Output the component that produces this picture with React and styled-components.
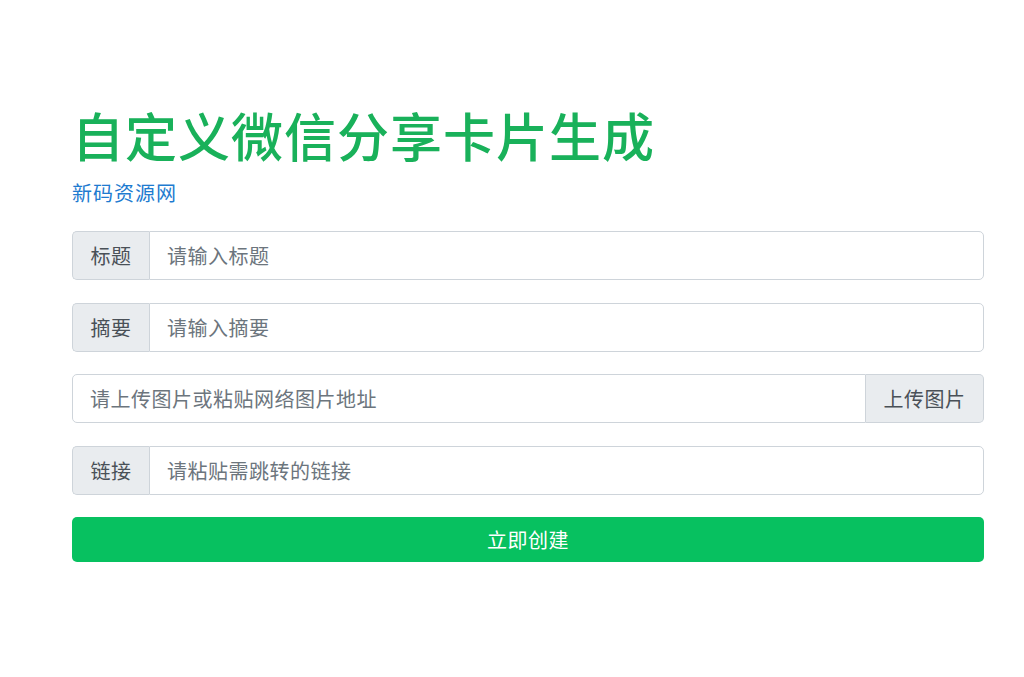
import React from "react";
import styled, { createGlobalStyle } from "styled-components";

const GlobalStyle = createGlobalStyle`
  * { box-sizing: border-box; }
  body {
    margin: 0;
    background: #fff;
    font-family: "Noto Sans CJK SC", "Noto Sans", sans-serif;
    color: #212529;
  }
`;

const Page = styled.div`
  width: 912px;
  margin: 0 auto 0 72px;
  padding-top: 104px;
`;

const Title = styled.h1`
  margin: 0 0 12px;
  font-size: 52px;
  line-height: 62px;
  font-weight: 500;
  color: #19b15a;
  letter-spacing: 1px;
`;

const SubLink = styled.a`
  display: block;
  margin: 0 0 23px;
  font-size: 20px;
  line-height: 30px;
  color: #1e7bd0;
  text-decoration: none;
  letter-spacing: 1px;
`;

const Group = styled.div`
  display: flex;
  height: 49px;
  margin-bottom: 22.5px;
`;

const Addon = styled.span`
  display: flex;
  align-items: center;
  padding: 0 17.5px;
  background: #e9ecef;
  border: 1px solid #ced4da;
  color: #495057;
  font-size: 20px;
  letter-spacing: 0.5px;
  white-space: nowrap;
  border-radius: ${p => (p.$side === "left" ? "5px 0 0 5px" : "0 5px 5px 0")};
  ${p => (p.$side === "left" ? "border-right: none;" : "border-left: none;")}
`;

const Field = styled.input`
  flex: 1;
  min-width: 0;
  height: 100%;
  padding: 0 17px;
  border: 1px solid #ced4da;
  font-family: inherit;
  font-size: 20px;
  letter-spacing: 0.5px;
  color: #495057;
  background: #fff;
  outline: none;
  border-radius: ${p => p.$radius};
  &::placeholder { color: #6c757d; }
`;

const Submit = styled.button`
  display: block;
  width: 100%;
  height: 45px;
  border: none;
  border-radius: 5px;
  background: #07c160;
  color: #fff;
  font-family: inherit;
  font-size: 20px;
  letter-spacing: 0.5px;
  cursor: pointer;
`;

export default function App() {
  return (
    <>
      <GlobalStyle />
      <Page>
        <Title>自定义微信分享卡片生成</Title>
        <SubLink href="#">新码资源网</SubLink>
        <Group>
          <Addon $side="left">标题</Addon>
          <Field placeholder="请输入标题" $radius="0 5px 5px 0" />
        </Group>
        <Group>
          <Addon $side="left">摘要</Addon>
          <Field placeholder="请输入摘要" $radius="0 5px 5px 0" />
        </Group>
        <Group>
          <Field placeholder="请上传图片或粘贴网络图片地址" $radius="5px 0 0 5px" />
          <Addon $side="right">上传图片</Addon>
        </Group>
        <Group>
          <Addon $side="left">链接</Addon>
          <Field placeholder="请粘贴需跳转的链接" $radius="0 5px 5px 0" />
        </Group>
        <Submit>立即创建</Submit>
      </Page>
    </>
  );
}
